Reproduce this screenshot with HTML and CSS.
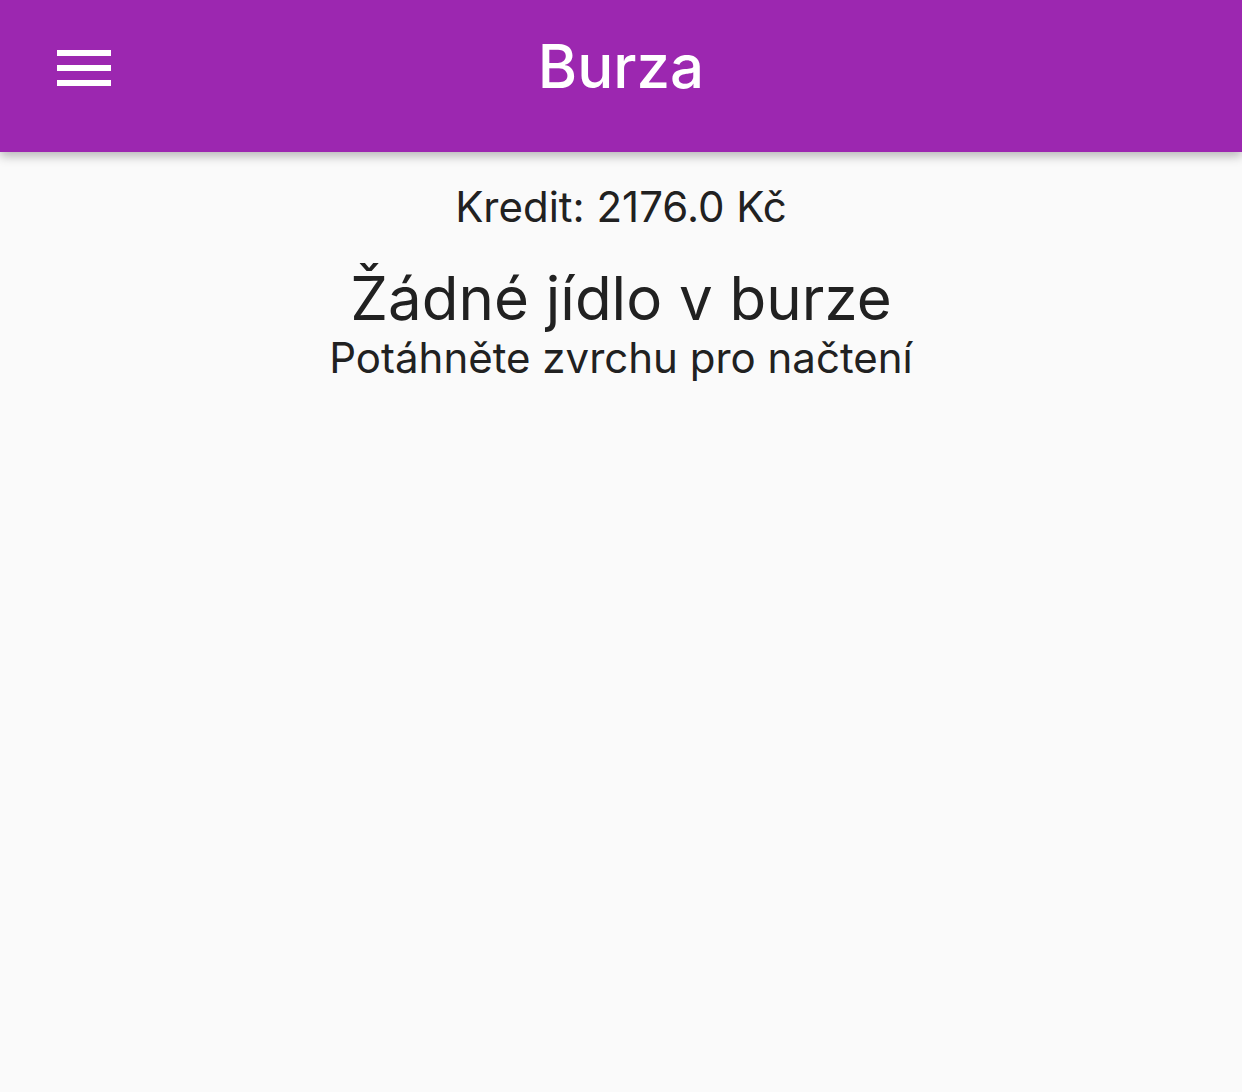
FILE: index.html
```html
<!DOCTYPE html>
<html lang="cs">
<head>
<meta charset="utf-8">
<title>Burza</title>
<link rel="stylesheet" href="styles.css">
</head>
<body>
<header class="appbar">
  <button class="menu" aria-label="Menu">
    <svg width="54" height="36" viewBox="0 0 54 36"><rect x="0" y="0" width="54" height="6" fill="#fff"/><rect x="0" y="15" width="54" height="6" fill="#fff"/><rect x="0" y="30" width="54" height="6" fill="#fff"/></svg>
  </button>
  <h1 class="title">Burza</h1>
</header>
<main class="content">
  <p class="credit">Kredit: 2176.0 Kč</p>
  <p class="empty">Žádné jídlo v burze</p>
  <p class="hint">Potáhněte zvrchu pro načtení</p>
</main>
</body>
</html>
```
FILE: styles.css
```css
html, body {
  margin: 0;
  padding: 0;
  height: 100%;
}
body {
  background: #fafafa;
  font-family: Inter, "Noto Sans", sans-serif;
  color: #212121;
}
.appbar {
  position: relative;
  height: 152px;
  background: #9c27b0;
  display: flex;
  align-items: center;
  justify-content: center;
  box-shadow: 0 4px 10px rgba(0,0,0,0.28);
}
.menu {
  position: absolute;
  left: 57px;
  top: 50px;
  padding: 0;
  border: 0;
  background: none;
  line-height: 0;
}
.title {
  margin: -20px 0 0;
  color: #fff;
  font-size: 60px;
  font-weight: 500;
  line-height: 60px;
}
.content {
  display: flex;
  flex-direction: column;
  align-items: center;
  text-align: center;
}
.credit {
  margin: 27px 0 0;
  font-size: 42px;
  line-height: 56px;
}
.empty {
  margin: 31px 0 0;
  font-size: 60px;
  line-height: 64px;
}
.hint {
  margin: 2px 0 0;
  font-size: 42px;
  line-height: 52px;
}
```
